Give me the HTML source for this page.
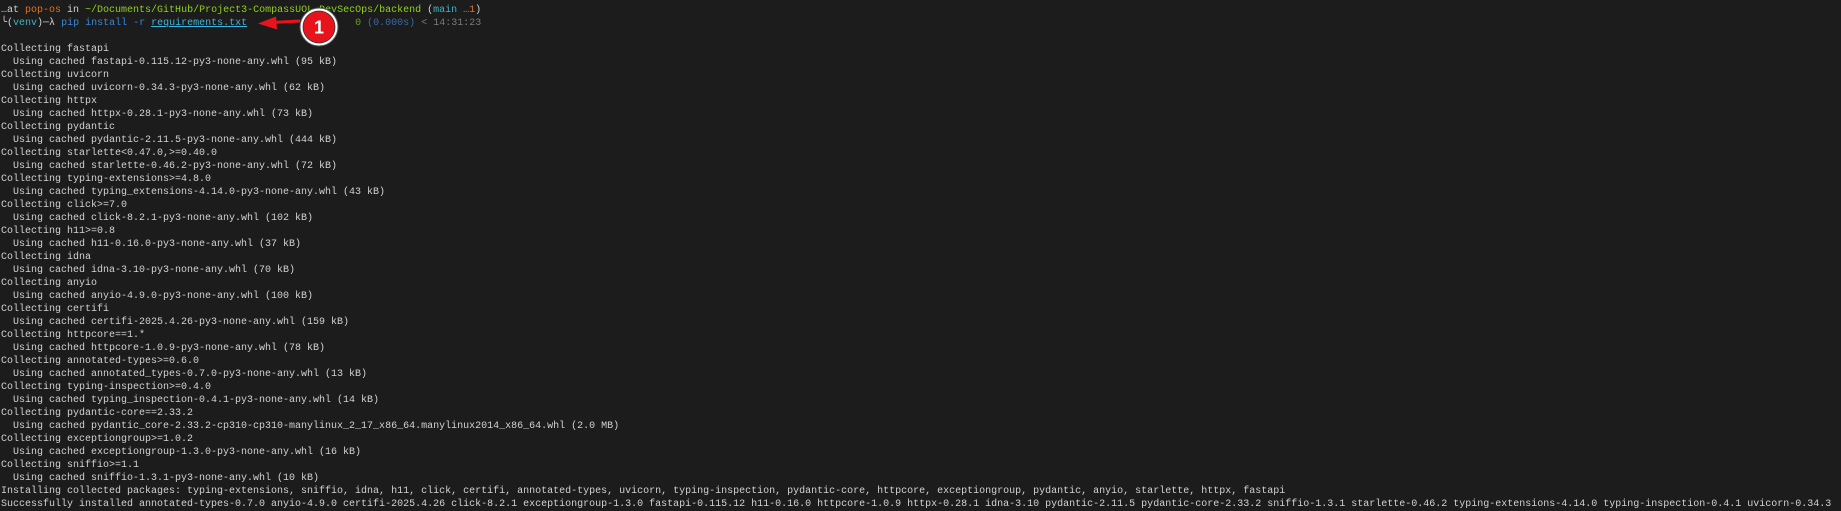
<!DOCTYPE html>
<html><head><meta charset="utf-8"><style>
html,body{margin:0;padding:0;background:#1c1c1c;width:1841px;height:511px;overflow:hidden}
pre{margin:0;padding:4px 0 0 1px;font-family:"Liberation Mono","DejaVu Sans Mono",monospace;font-size:10px;line-height:13px;color:#d2d2d2;white-space:pre}
.o{color:#e2701e}.g{color:#8fcf1e}.c{color:#3cb4c8}.b{color:#3a86d8}.u{color:#3cb4e0;text-decoration:underline}.gr{color:#7a7a7a}.gn{color:#6a9a30}.bl{color:#3a6aa8}
svg{position:absolute;left:0;top:0}
</style></head><body>
<pre>…at <span class="o">pop-os</span> in <span class="g">~/Documents/GitHub/Project3-CompassUOL-DevSecOps/backend</span> (<span class="c">main</span> <span class="o">…1</span>)
╰(<span class="c">venv</span>)─λ <span class="b">pip install -r</span> <span class="u">requirements.txt</span>                  <span class="gn">0</span> <span class="bl">(0.000s)</span> <span class="gr">&lt; 14:31:23</span>

Collecting fastapi
  Using cached fastapi-0.115.12-py3-none-any.whl (95 kB)
Collecting uvicorn
  Using cached uvicorn-0.34.3-py3-none-any.whl (62 kB)
Collecting httpx
  Using cached httpx-0.28.1-py3-none-any.whl (73 kB)
Collecting pydantic
  Using cached pydantic-2.11.5-py3-none-any.whl (444 kB)
Collecting starlette&lt;0.47.0,&gt;=0.40.0
  Using cached starlette-0.46.2-py3-none-any.whl (72 kB)
Collecting typing-extensions&gt;=4.8.0
  Using cached typing_extensions-4.14.0-py3-none-any.whl (43 kB)
Collecting click&gt;=7.0
  Using cached click-8.2.1-py3-none-any.whl (102 kB)
Collecting h11&gt;=0.8
  Using cached h11-0.16.0-py3-none-any.whl (37 kB)
Collecting idna
  Using cached idna-3.10-py3-none-any.whl (70 kB)
Collecting anyio
  Using cached anyio-4.9.0-py3-none-any.whl (100 kB)
Collecting certifi
  Using cached certifi-2025.4.26-py3-none-any.whl (159 kB)
Collecting httpcore==1.*
  Using cached httpcore-1.0.9-py3-none-any.whl (78 kB)
Collecting annotated-types&gt;=0.6.0
  Using cached annotated_types-0.7.0-py3-none-any.whl (13 kB)
Collecting typing-inspection&gt;=0.4.0
  Using cached typing_inspection-0.4.1-py3-none-any.whl (14 kB)
Collecting pydantic-core==2.33.2
  Using cached pydantic_core-2.33.2-cp310-cp310-manylinux_2_17_x86_64.manylinux2014_x86_64.whl (2.0 MB)
Collecting exceptiongroup&gt;=1.0.2
  Using cached exceptiongroup-1.3.0-py3-none-any.whl (16 kB)
Collecting sniffio&gt;=1.1
  Using cached sniffio-1.3.1-py3-none-any.whl (10 kB)
Installing collected packages: typing-extensions, sniffio, idna, h11, click, certifi, annotated-types, uvicorn, typing-inspection, pydantic-core, httpcore, exceptiongroup, pydantic, anyio, starlette, httpx, fastapi
Successfully installed annotated-types-0.7.0 anyio-4.9.0 certifi-2025.4.26 click-8.2.1 exceptiongroup-1.3.0 fastapi-0.115.12 h11-0.16.0 httpcore-1.0.9 httpx-0.28.1 idna-3.10 pydantic-2.11.5 pydantic-core-2.33.2 sniffio-1.3.1 starlette-0.46.2 typing-extensions-4.14.0 typing-inspection-0.4.1 uvicorn-0.34.3</pre>
<svg width="1841" height="511" viewBox="0 0 1841 511">
<line x1="300" y1="21" x2="272" y2="22.5" stroke="#e8141c" stroke-width="3"/>
<polygon points="258,23.5 276,16.5 277,29.5" fill="#e8141c"/>
<circle cx="319" cy="27" r="19" fill="#fff" stroke="#555" stroke-width="1"/>
<circle cx="319" cy="27" r="16" fill="#e8141c" stroke="#333" stroke-width="0.8"/>
<text x="319" y="33.5" text-anchor="middle" font-family="Liberation Sans,sans-serif" font-weight="bold" font-size="18" fill="#fff">1</text>
</svg>
</body></html>
